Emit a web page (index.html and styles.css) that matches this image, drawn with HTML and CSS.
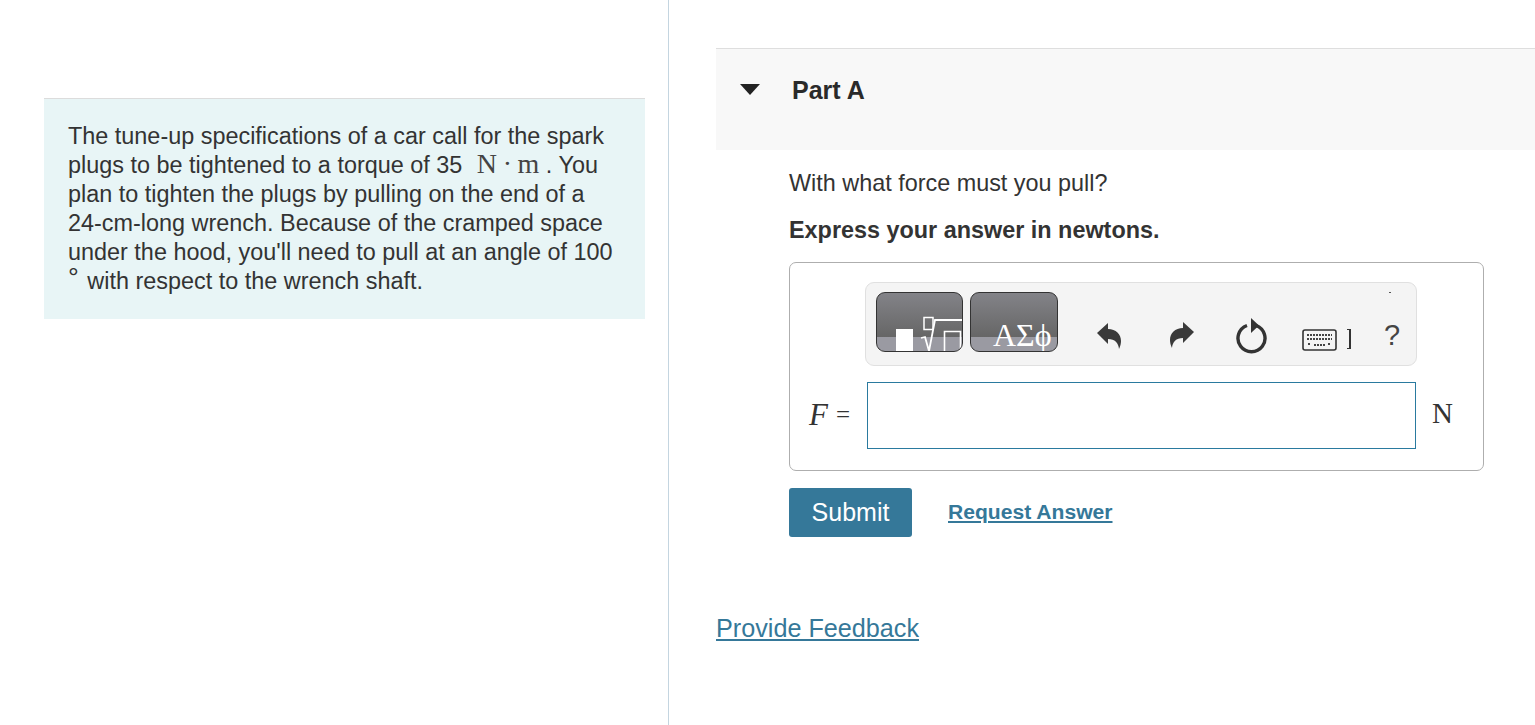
FILE: index.html
```html
<!DOCTYPE html>
<html lang="en">
<head>
<meta charset="utf-8">
<title>Part A</title>
<link rel="stylesheet" href="styles.css">
</head>
<body>
<div class="page">
  <aside class="left">
    <div class="intro">
      <p>The tune-up specifications of a car call for the spark plugs to be tightened to a torque of 35 <span class="math unit">N&#8201;·&#8201;m</span> . You plan to tighten the plugs by pulling on the end of a 24-cm-long wrench. Because of the cramped space under the hood, you'll need to pull at an angle of 100 <span class="deg">°</span> with respect to the wrench shaft.</p>
    </div>
  </aside>
  <main class="right">
    <section class="part">
      <header class="part-head">
        <svg class="caret" width="20" height="12" viewBox="0 0 20 12"><path d="M0 1h20l-10 11z" fill="#222"/></svg>
        <h2>Part A</h2>
      </header>
      <div class="part-body">
        <p class="question">With what force must you pull?</p>
        <p class="instr">Express your answer in newtons.</p>
        <div class="answer">
          <div class="toolbar">
            <span class="dot"></span>
            <div class="tpl">
              <svg width="87" height="60" viewBox="0 0 87 60" fill="none" stroke="#fff">
                <rect x="20" y="37" width="17" height="23" fill="#fff" stroke="none"/>
                <rect x="48" y="25.500" width="9" height="12" stroke-width="1.500"/>
                <path d="M45 46l4-1 4 14 6-31h28" stroke-width="1.800"/>
                <path d="M68.500 60V39.500h16V60" stroke-width="1.600"/>
              </svg>
            </div>
            <div class="tpl greek">ΑΣϕ</div>
            <div class="tools">
              <svg class="undo" width="26" height="28" viewBox="0 0 26 28"><path d="M1 12L12 2v6c8 0 13 5 13 12 0 2-.5 5-2 8-.5-6-4-10-11-10v5z" fill="#3a3a3a"/></svg>
              <svg class="redo" width="26" height="28" viewBox="0 0 26 28"><path d="M25 12L14 2v6C6 8 1 13 1 20c0 2 .5 5 2 8 .5-6 4-10 11-10v5z" fill="#3a3a3a"/></svg>
              <svg class="reset" width="32" height="36" viewBox="0 0 32 36"><path d="M12 7.500A13.500 13.500 0 1 0 21 7.500" fill="none" stroke="#333" stroke-width="3.400"/><path d="M16 0l8 7.500-8 7.500z" fill="#333"/></svg>
              <span class="kbd-wrap">
                <svg width="35" height="22" viewBox="0 0 35 22"><rect x="1" y="1" width="33" height="20" rx="2" fill="#f4f4f4" stroke="#333" stroke-width="1.600"/><path d="M5 6h25M5 10h25M6 15h3M12 16h11M26 15h3" fill="none" stroke="#444" stroke-width="2" stroke-dasharray="2 1"/></svg>
                <span class="bracket"></span>
              </span>
              <span class="help">?</span>
            </div>
          </div>
          <div class="eq">
            <span class="lhs"><i class="var">F</i><span class="eqs">=</span></span>
            <input class="field" type="text" aria-label="F">
            <span class="math rhs">N</span>
          </div>
        </div>
        <div class="actions">
          <button class="submit" type="button">Submit</button>
          <a class="req" href="#">Request Answer</a>
        </div>
      </div>
    </section>
    <a class="feedback" href="#">Provide Feedback</a>
  </main>
</div>
</body>
</html>
```
FILE: styles.css
```css
* { box-sizing: border-box; }
html, body { margin: 0; height: 100%; }
body {
  font-family: "Liberation Sans", Arial, sans-serif;
  color: #333;
  background: #fff;
  overflow: hidden;
}
.page { display: flex; height: 725px; }
.left {
  width: 669px;
  flex: none;
  border-right: 1px solid #c4d5e0;
  padding: 98px 23px 0 44px;
}
.intro {
  background: #e8f5f6;
  border-top: 1px solid #dcdcdc;
  height: 221px;
  padding: 23px 24px 0;
}
.intro p {
  margin: 0;
  font-size: 23.420px;
  line-height: 28.900px;
  width: 548px;
}
.math { font-family: "Liberation Serif", "Times New Roman", serif; }
.unit {
  display: inline-block;
  font-size: 28px;
  line-height: 20px;
  margin-left: 8px;
  color: #444;
}
.deg {
  display: inline-block;
  font-size: 27px;
  line-height: 10px;
  vertical-align: 2px;
  margin-right: 2px;
}
.right { flex: 1; min-width: 0; padding: 48px 0 0 47px; }
.part-head {
  display: flex;
  height: 102px;
  background: #f8f8f8;
  border-top: 1px solid #dedede;
  padding: 25px 0 0 24px;
  align-items: flex-start;
}
.caret { margin-top: 9px; }
.part-head h2 {
  margin: 1px 0 0 32px;
  font-size: 25px;
  line-height: 30px;
  font-weight: 700;
  color: #2a2a2a;
}
.part-body { padding: 18px 51px 0 73px; }
.question { margin: 0; font-size: 23.400px; line-height: 30px; }
.instr { margin: 17px 0 0; font-size: 23.400px; line-height: 30px; font-weight: 700; }
.answer {
  margin-top: 17px;
  height: 209px;
  border: 1px solid #aeaeae;
  border-radius: 7px;
  padding: 19px 0 0 75px;
}
.toolbar {
  position: relative;
  width: 552px;
  height: 84px;
  display: flex;
  align-items: flex-start;
  gap: 7px;
  padding: 9px 0 0 10px;
  background: #f4f4f4;
  border: 1px solid #e0e0e0;
  border-radius: 9px;
}
.dot {
  position: absolute;
  top: 9px;
  right: 25px;
  width: 2px;
  height: 1px;
  background: #555;
}
.tpl {
  flex: none;
  width: 87px;
  height: 60px;
  overflow: hidden;
  border: 1px solid #333;
  border-radius: 9px;
  background: linear-gradient(#838388 0, #666 44px, #9a9aa2 44px, #9a9aa2 100%);
}
.tpl svg { display: block; margin: -1px; }
.greek {
  width: 88px;
  color: #fff;
  font-family: "Liberation Serif", serif;
  font-size: 32px;
  line-height: 28px;
  padding: 28px 0 0 22px;
  white-space: nowrap;
}
.tools {
  flex: 1;
  position: relative;
  display: flex;
  align-items: flex-start;
  padding: 28px 0 0 31px;
}
.undo { flex: none; margin-top: 1px; }
.redo { flex: none; margin: 0 0 0 47px; }
.reset { flex: none; margin: -2px 0 0 40px; }
.kbd-wrap { display: flex; flex: none; margin: 9px 0 0 35px; }
.bracket {
  width: 4px;
  height: 20px;
  margin-left: 10px;
  border: solid #333;
  border-width: 1px 2px 1px 0;
}
.help { font-size: 29px; line-height: 32px; margin: -1px 0 0 33px; color: #444; }
.eq { display: flex; align-items: center; margin-top: 16px; margin-left: -75px; }
.lhs {
  flex: none;
  width: 77px;
  display: flex;
  align-items: center;
  margin-top: -2px;
  padding-left: 19px;
  font-family: "Liberation Serif", serif;
}
.var { font-size: 31px; line-height: 34px; }
.eqs { font-size: 25px; margin-left: 8px; }
.field {
  flex: none;
  width: 549px;
  height: 67px;
  border: 1px solid #2a7a9f;
  background: #fff;
  border-radius: 0;
  outline: none;
}
.rhs { font-size: 29px; margin: -5px 0 0 16px; color: #333; }
.actions { display: flex; align-items: center; margin-top: 17px; }
.submit {
  width: 123px;
  height: 49px;
  border: 0;
  border-radius: 3px;
  background: #357899;
  color: #fff;
  font: 400 25px "Liberation Sans", Arial, sans-serif;
}
.req {
  margin: -2px 0 0 36px;
  font-size: 21.100px;
  font-weight: 700;
  color: #357899;
}
.feedback {
  display: inline-block;
  margin: 76px 0 0;
  font-size: 25.200px;
  line-height: 30px;
  color: #357899;
}
```
